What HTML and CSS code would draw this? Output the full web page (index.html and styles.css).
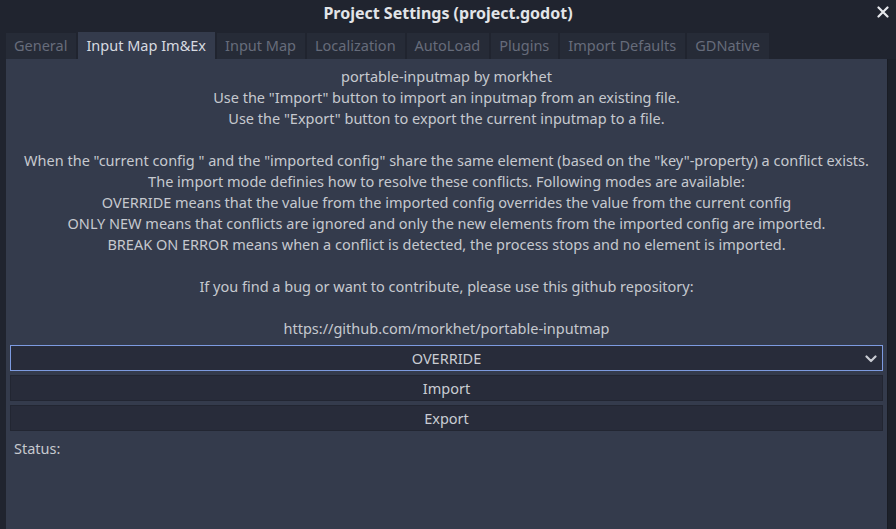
FILE: index.html
```html
<!DOCTYPE html>
<html>
<head>
<meta charset="utf-8">
<link rel="stylesheet" href="styles.css">
</head>
<body>
<div class="window">
  <div class="titlebar">
    <span class="title">Project Settings (project.godot)</span>
    <svg class="close" width="12" height="12" viewBox="0 0 12 12"><path d="M1.5 1.5 L10.5 10.5 M10.5 1.5 L1.5 10.5" stroke="#e6e8ec" stroke-width="2.2" stroke-linecap="round"/></svg>
  </div>
  <div class="tabs">
    <div class="tab">General</div>
    <div class="tab active">Input Map Im&amp;Ex</div>
    <div class="tab">Input Map</div>
    <div class="tab">Localization</div>
    <div class="tab">AutoLoad</div>
    <div class="tab">Plugins</div>
    <div class="tab">Import Defaults</div>
    <div class="tab">GDNative</div>
  </div>
  <div class="body">
    <div class="panel">
      <div class="info">
        <p>portable-inputmap by morkhet</p>
        <p>Use the "Import" button to import an inputmap from an existing file.</p>
        <p>Use the "Export" button to export the current inputmap to a file.</p>
        <p>&nbsp;</p>
        <p>When the "current config " and the "imported config" share the same element (based on the "key"-property) a conflict exists.</p>
        <p>The import mode definies how to resolve these conflicts. Following modes are available:</p>
        <p>OVERRIDE means that the value from the imported config overrides the value from the current config</p>
        <p>ONLY NEW means that conflicts are ignored and only the new elements from the imported config are imported.</p>
        <p>BREAK ON ERROR means when a conflict is detected, the process stops and no element is imported.</p>
        <p>&nbsp;</p>
        <p>If you find a bug or want to contribute, please use this github repository:</p>
        <p>&nbsp;</p>
        <p>https://github.com/morkhet/portable-inputmap</p>
      </div>
      <div class="controls">
        <div class="btn select">
          <span>OVERRIDE</span>
          <svg class="chev" width="12" height="8" viewBox="0 0 12 8"><path d="M1.5 1.5 L6 6 L10.5 1.5" fill="none" stroke="#c9ccd3" stroke-width="2.2" stroke-linecap="round" stroke-linejoin="round"/></svg>
        </div>
        <div class="btn">Import</div>
        <div class="btn">Export</div>
      </div>
      <div class="status">Status:</div>
    </div>
    <div class="scrollstrip"></div>
  </div>
</div>
</body>
</html>
```
FILE: styles.css
```css
html, body {
  margin: 0;
  padding: 0;
  background: #20242f;
  font-family: "Noto Sans", "Open Sans", sans-serif;
  font-size: 14.5px;
  color: #c6c9cf;
}
.window {
  width: 896px;
  height: 529px;
  display: flex;
  flex-direction: column;
  overflow: hidden;
  background: #20242f;
}
.titlebar {
  height: 26px;
  display: flex;
  align-items: center;
  justify-content: center;
  position: relative;
}
.title {
  font-weight: bold;
  font-size: 16px;
  color: #e2e4e8;
}
.close {
  position: absolute;
  left: 877px;
  top: 6px;
}
.tabs {
  display: flex;
  gap: 2px;
  padding-left: 6px;
  margin-top: 6px;
  height: 27px;
}
.tab {
  background: #262b37;
  color: #666c7b;
  padding: 0 9px 2px 8px;
  display: flex;
  align-items: center;
  height: 24px;
  margin-top: 1px;
}
.tab.active {
  background: #343b4c;
  color: #d7dae0;
  height: 25px;
  margin-top: 0;
}
.body {
  flex: 1;
  display: flex;
  padding-left: 6px;
}
.panel {
  flex: 1;
  background: #343b4c;
  display: flex;
  flex-direction: column;
  padding: 7px 4px 0 4px;
}
.scrollstrip {
  width: 8px;
  background: #1d212a;
  border-left: 1px solid #191c24;
}
.info {
  text-align: center;
  line-height: 21px;
}
.info p {
  margin: 0;
  white-space: nowrap;
}
.controls {
  display: flex;
  flex-direction: column;
  gap: 4px;
  margin-top: 6px;
}
.btn {
  height: 24px;
  background: #282c3a;
  border: 1px solid #222632;
  display: flex;
  align-items: center;
  justify-content: center;
  color: #c9ccd3;
  position: relative;
}
.btn.select {
  border-color: #7d9be0;
}
.chev {
  position: absolute;
  right: 5px;
  top: 9px;
}
.status {
  margin-top: 7px;
  padding-left: 4px;
  color: #c6c9cf;
}
```
